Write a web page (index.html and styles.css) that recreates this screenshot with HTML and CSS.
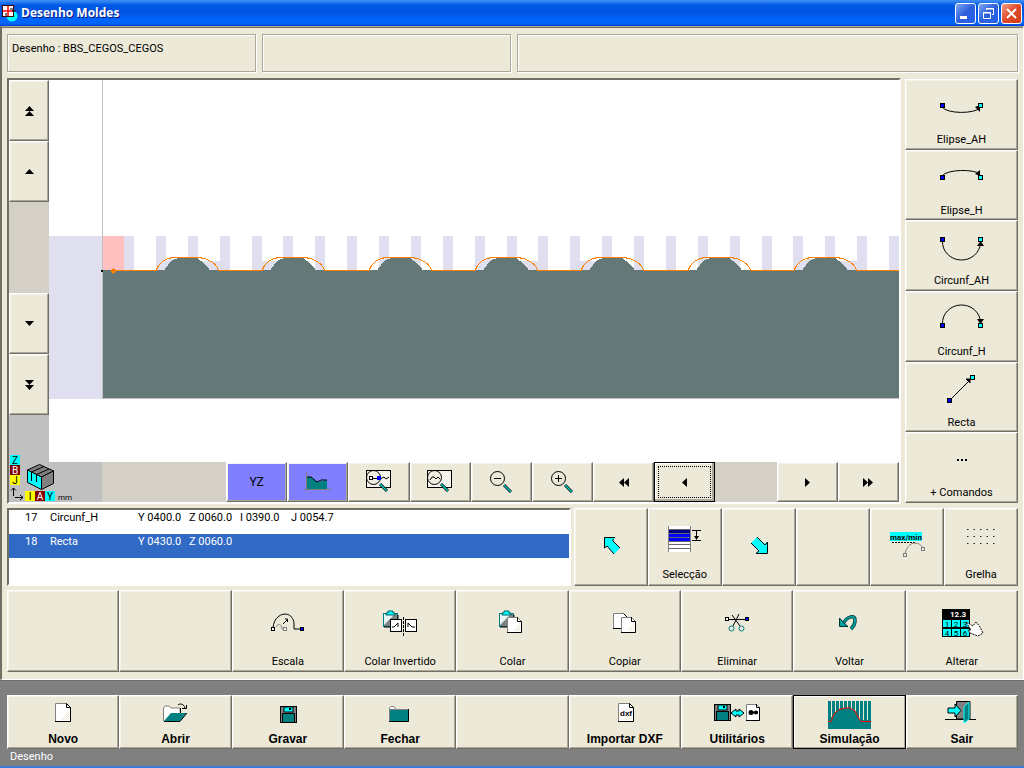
FILE: index.html
```
<!DOCTYPE html>
<html lang="pt">
<head>
    <meta charset="UTF-8">
    <meta name="viewport" content="width=device-width, initial-scale=1.0">
    <title>Desenho Moldes</title>
    <link rel="stylesheet" href="styles.css">
</head>
<body>
    <!-- shared shapes -->
    <svg class="defs" width="0" height="0">
        <defs>
            <pattern id="dither" width="2" height="2" patternUnits="userSpaceOnUse">
                <rect width="2" height="2" fill="#fff"/>
                <rect width="1" height="1" fill="#ece9d8"/>
                <rect x="1" y="1" width="1" height="1" fill="#ece9d8"/>
            </pattern>
            <g id="blueNode"><rect x="0.5" y="0.5" width="4" height="4" fill="#00f" stroke="#000"/></g>
            <g id="cyanNode"><rect x="0.5" y="0.5" width="4" height="4" fill="#0ff" stroke="#000"/></g>
            <g id="page">
                <path d="M0.5 0.5H11.5L15.5 4.5V18.5H0.5Z" fill="#fff" stroke="#808080"/>
                <path d="M14 7V17H5Z" fill="url(#dither)"/>
                <path d="M11.5 0.5V4.5H15.5V18.5H0" fill="none" stroke="#000"/>
                <path d="M11.5 0.5L15.5 4.5" stroke="#000"/>
            </g>
            <g id="floppy">
                <rect x="0.5" y="0.5" width="16" height="16" fill="#808080" stroke="#000"/>
                <rect x="4" y="1" width="9" height="5" fill="#0ff" stroke="#000"/>
                <rect x="9" y="2" width="2" height="2" fill="#000"/>
                <rect x="2.5" y="7.5" width="12" height="9" fill="#008080" stroke="#000"/>
            </g>
            <g id="clipboard">
                <rect x="1.5" y="2.5" width="14" height="13" fill="#808080" stroke="#008080"/>
                <path d="M2 3H13L2 14Z" fill="#e8f4f4"/>
                <path d="M16 4V16H2" fill="none" stroke="#000"/>
                <path d="M4 4V2H6V0H11V2H13V4Z" fill="#0ff" stroke="#006060"/>
            </g>
            <g id="glass">
                <path d="M14 14L21 21" stroke="#000" stroke-width="3"/>
                <path d="M14 14L21 21" stroke="#0cc" stroke-width="1.5"/>
                <circle cx="7.5" cy="7.5" r="7" fill="#ece9d8" fill-opacity="0.6" stroke="#000"/>
            </g>
            <g id="hump">
                <path d="M9 35V32L12 29L14 26L17 24L22 22H41L45 25L48 27L50 30L53 33V35Z" fill="#647878"/>
                <path d="M0 34.5C3 27 9 22 18 21.500H41C51 22 59 26 63 34.500H107" fill="none" stroke="#ff8000"/>
            </g>
        </defs>
    </svg>

    <header class="titlebar">
        <svg class="app-icon" width="16" height="18" viewBox="0 0 16 18">
            <circle cx="10" cy="12" r="5.5" fill="#0ff"/>
            <rect x="0.5" y="1.5" width="11" height="11" fill="#fff" stroke="#400"/>
            <path d="M6 2V12M1 7H11" stroke="#f00" stroke-width="1.5"/>
            <path d="M4 9V12M8 5H11M10 7H14" stroke="#000"/>
        </svg>
        <h1>Desenho Moldes</h1>
        <div class="window-buttons">
            <button class="win" aria-label="Minimizar"><svg width="17" height="17" viewBox="0 0 17 17"><path d="M3 12.5H10" stroke="#fff" stroke-width="3"/></svg></button>
            <button class="win" aria-label="Restaurar"><svg width="17" height="17" viewBox="0 0 17 17" fill="none" stroke="#fff"><path d="M6.5 5V3.5H13.5V9.5H12M6 4H14"/><path d="M3.5 7.5H10.5V13.5H3.5ZM3 8H11"/></svg></button>
            <button class="win close" aria-label="Fechar janela"><svg width="17" height="17" viewBox="0 0 17 17"><path d="M4 4L13 13M13 4L4 13" stroke="#fff" stroke-width="2"/></svg></button>
        </div>
    </header>

    <main class="client">
        <section class="info">
            <div class="panel">Desenho : BBS_CEGOS_CEGOS</div>
            <div class="panel"></div>
            <div class="panel"></div>
        </section>

        <section class="work">
            <div class="viewer">
                <div class="vertical">
                    <button aria-label="Subir tudo"><svg width="9" height="10" viewBox="0 0 9 10"><path d="M4.500 0L9 5H0ZM4.500 5L9 10H0Z"/></svg></button>
                    <button aria-label="Subir"><svg width="9" height="5" viewBox="0 0 9 5"><path d="M4.500 0L9 5H0Z"/></svg></button>
                    <div class="trough"></div>
                    <button aria-label="Descer"><svg width="9" height="5" viewBox="0 0 9 5"><path d="M0 0H9L4.500 5Z"/></svg></button>
                    <button aria-label="Descer tudo"><svg width="9" height="10" viewBox="0 0 9 10"><path d="M0 0H9L4.500 5ZM0 5H9L4.500 10Z"/></svg></button>
                </div>
                <svg class="drawing" viewBox="0 0 850 382" id="drawing">
                    <rect x="0" y="156" width="53" height="163" fill="#e0dfef"/>
                    <g id="bars" fill="#e0dfef">
                        <rect x="75" y="156" width="10" height="34"/>
                    </g>
                    <g fill="#e0dfef">
                        <path d="M107 190L113 183L121 179H132L116 190ZM149 181H171V190H149Z"/>
                        <path d="M203 181H235V190H203Z"/>
                        <path d="M436 179H450V190H436ZM468 181H490V190H468Z"/>
                        <path d="M531 181H554V190H531Z"/>
                        <path d="M745 190L751 183L759 179H770L754 190ZM786 181H809V190H786Z"/>
                    </g>
                    <rect x="54" y="156" width="21" height="34" fill="#ffc0c0"/>
                    <rect x="54" y="190" width="796" height="128" fill="#647878"/>
                    <g id="humps"></g>
                    <path d="M64 190.500H107" stroke="#ff8000"/>
                    <path d="M64 188L67 191L64 194L61 191Z" fill="#ff8000"/>
                    <path d="M53.500 0V318.500H850" fill="none" stroke="#c0c0c0"/>
                    <rect x="52" y="190" width="2" height="2"/>
                </svg>
                <div class="toolbar">
                    <div class="corner"></div>
                    <div class="trough"></div>
                    <button class="on">YZ</button>
                    <button class="on" aria-label="Perfil"><svg width="28" height="20" viewBox="0 0 28 20"><path d="M3 5H7L13 10L23 8V17H3Z" fill="#008080"/><path d="M3 5H7L13 10L17 8H23" fill="none" stroke="#000"/><path d="M2.500 0V19M0 17.500H28" stroke="#808080"/></svg></button>
                    <button aria-label="Enquadrar ponto"><svg width="26" height="24" viewBox="0 0 26 24"><rect x="0.500" y="0.500" width="24" height="17" fill="url(#dither)" stroke="#000"/><use href="#glass"/><path d="M3 8.500H15L18 7L20 9L23 7" fill="none" stroke="#000"/><rect x="3.500" y="6.500" width="3" height="3" fill="#fff" stroke="#000"/><rect x="11" y="6" width="4" height="4" fill="#00f"/></svg></button>
                    <button aria-label="Enquadrar tudo"><svg width="26" height="24" viewBox="0 0 26 24"><rect x="0.500" y="0.500" width="24" height="17" fill="url(#dither)" stroke="#000"/><use href="#glass"/><path d="M3 10L5 7H7L9 9L11 7L13 9" fill="none" stroke="#000"/></svg></button>
                    <button aria-label="Reduzir"><svg width="22" height="22" viewBox="0 0 22 22"><use href="#glass"/><path d="M4 7.500H11" stroke="#000"/></svg></button>
                    <button aria-label="Ampliar"><svg width="22" height="22" viewBox="0 0 22 22"><use href="#glass"/><path d="M4 7.500H11M7.500 4V11" stroke="#000"/></svg></button>
                    <button aria-label="Esquerda tudo"><svg width="10" height="9" viewBox="0 0 10 9"><path d="M5 0V9L0 4.500ZM10 0V9L5 4.500Z"/></svg></button>
                    <button class="focused" aria-label="Esquerda"><svg width="5" height="9" viewBox="0 0 5 9"><path d="M5 0V9L0 4.500Z"/></svg></button>
                    <div class="trough"></div>
                    <button aria-label="Direita"><svg width="5" height="9" viewBox="0 0 5 9"><path d="M0 0V9L5 4.500Z"/></svg></button>
                    <button aria-label="Direita tudo"><svg width="10" height="9" viewBox="0 0 10 9"><path d="M0 0V9L5 4.500ZM5 0V9L10 4.500Z"/></svg></button>
                </div>
                <svg class="axes" width="64" height="48" viewBox="0 0 64 48">
                    <rect x="1" y="1" width="10" height="10" fill="#0ff"/>
                    <rect x="1" y="11" width="10" height="10" fill="#800000"/>
                    <rect x="1" y="21" width="10" height="10" fill="#ff0"/>
                    <rect x="16" y="37" width="10" height="10" fill="#ff0"/>
                    <rect x="26" y="37" width="10" height="10" fill="#800000"/>
                    <rect x="36" y="37" width="10" height="10" fill="#0ff"/>
                    <text x="6" y="10">Z</text>
                    <text x="6" y="20" class="light">B</text>
                    <text x="6" y="30">J</text>
                    <text x="21" y="46">I</text>
                    <text x="31" y="46" class="light">A</text>
                    <text x="41" y="46">Y</text>
                    <text x="56" y="46" class="unit">mm</text>
                    <path d="M4.500 42V34M2 36.500L4.500 34L7 36.500M6 43.500H14M11 41L14 43.500L11 46" fill="none" stroke="#000"/>
                    <path d="M18.500 16L30.500 10.500L44.500 17L32.500 23Z" fill="#808080" stroke="#000"/>
                    <path d="M18.500 16L32.500 23V35.500L18.500 28.500Z" fill="#0ff" stroke="#000"/>
                    <path d="M32.500 23L44.500 17V29.500L32.500 35.500Z" fill="#808080" stroke="#000"/>
                    <path d="M22.500 27V18L35 12.500M27.500 28V20.500L40 15" fill="none" stroke="#000"/>
                </svg>
            </div>

            <nav class="commands">
                <button>
                    <svg width="60" height="48" viewBox="0 0 60 48"><path d="M10 22C15 29 42 29 48 23" fill="none" stroke="#000"/><path d="M48 20V27L43 22Z"/><use href="#blueNode" x="8" y="18"/><use href="#cyanNode" x="46" y="18"/></svg>
                    <span>Elipse_AH</span>
                </button>
                <button>
                    <svg width="60" height="48" viewBox="0 0 60 48"><path d="M10 20C15 13 42 13 48 18" fill="none" stroke="#000"/><path d="M48 14V20L43 18Z"/><use href="#blueNode" x="8" y="19"/><use href="#cyanNode" x="46" y="19"/></svg>
                    <span>Elipse_H</span>
                </button>
                <button>
                    <svg width="60" height="48" viewBox="0 0 60 48"><path d="M10.500 15A19 18 0 0 0 48.500 17" fill="none" stroke="#000"/><path d="M48.500 15L52 20H45Z"/><use href="#blueNode" x="8" y="11"/><use href="#cyanNode" x="46" y="11"/></svg>
                    <span>Circunf_AH</span>
                </button>
                <button>
                    <svg width="60" height="48" viewBox="0 0 60 48"><path d="M10.500 27A19 18 0 0 1 48.500 25" fill="none" stroke="#000"/><path d="M48.500 27L52 22H45Z"/><use href="#blueNode" x="8" y="26"/><use href="#cyanNode" x="46" y="26"/></svg>
                    <span>Circunf_H</span>
                </button>
                <button>
                    <svg width="60" height="48" viewBox="0 0 60 48"><path d="M17 33L38 12" stroke="#000"/><path d="M38 11V15L34 11Z" stroke="#000"/><use href="#blueNode" x="15" y="30"/><use href="#cyanNode" x="38" y="7"/></svg>
                    <span>Recta</span>
                </button>
                <button>
                    <svg width="60" height="48" viewBox="0 0 60 48"><path d="M25 21H27V23H25ZM29 21H31V23H29ZM33 21H35V23H33Z"/></svg>
                    <span>+ Comandos</span>
                </button>
            </nav>
        </section>

        <section class="program">
            <div class="list">
                <table>
                    <colgroup><col class="num"><col class="cmd"><col class="val"><col class="val"><col class="val"><col></colgroup>
                    <tbody>
                        <tr><td>17</td><td>Circunf_H</td><td>Y 0400.0</td><td>Z 0060.0</td><td>I 0390.0</td><td>J 0054.7</td></tr>
                        <tr class="selected"><td>18</td><td>Recta</td><td>Y 0430.0</td><td>Z 0060.0</td><td></td><td></td></tr>
                    </tbody>
                </table>
            </div>
            <div class="list-buttons">
                <button aria-label="Anterior"><svg width="48" height="44" viewBox="0 0 48 44"><path d="M17 19H28L26 23L33 30L27 36L20 28L17 30Z" fill="#0ff"/><path d="M28 19.500H17.500V30L20 28L27 36M26 21V23L33 30" fill="none" stroke="#000"/></svg></button>
                <button>
                    <svg width="48" height="44" viewBox="0 0 48 44"><rect x="8" y="8" width="21" height="26" fill="#fff"/><rect x="8" y="12" width="21" height="4" fill="#000080"/><rect x="8" y="16" width="21" height="7" fill="#00f"/><path d="M7.500 8V34M29.500 8V34" stroke="#808080"/><path d="M8 11.500H29M8 15.500H29M8 19.500H29M8 23.500H29M8 26.500H29M8 30.500H29" stroke="#667"/><path d="M31 12.500H40M35.500 12V21M31 22.500H40" stroke="#000"/><path d="M33 18H38L35.500 22Z"/></svg>
                    <span>Selecção</span>
                </button>
                <button aria-label="Seguinte"><svg width="48" height="44" viewBox="0 0 48 44"><path d="M16 25L22 19L30 26L32 24V35H21L24 32Z" fill="#0ff"/><path d="M22 19L30 27L32.500 24V35.500H21L24 33L16 25" fill="none" stroke="#000"/></svg></button>
                <button aria-label="Vazio"></button>
                <button aria-label="max/min"><svg width="48" height="44" viewBox="0 0 48 44"><rect x="7" y="14" width="32" height="9" fill="#0ff"/><text x="23" y="22" class="tiny bold">max/min</text><path d="M9 24.500H33" stroke="#000" stroke-dasharray="2 1"/><path d="M22 36C23 30 27 25 32 25C36 25 38 27 40 30" fill="none" stroke="#808080"/><rect x="20.500" y="35.500" width="3" height="3" fill="#ece9d8" stroke="#808080"/><rect x="38.500" y="29.500" width="3" height="3" fill="#ece9d8" stroke="#808080"/></svg></button>
                <button>
                    <svg width="48" height="44" viewBox="0 0 48 44"><path d="M10 11.500H38M10 18.500H38M10 25.500H38" stroke="#222" stroke-dasharray="1.500 5"/></svg>
                    <span>Grelha</span>
                </button>
            </div>
        </section>

        <section class="edit">
            <button aria-label="Vazio"></button>
            <button aria-label="Vazio"></button>
            <button>
                <svg width="48" height="44" viewBox="0 0 48 44"><path d="M9 26C10 10 28 7 30 21V27H38" fill="none" stroke="#000"/><path d="M12 25C14 21 18 22 18 27H20" fill="none" stroke="#808080"/><rect x="7.500" y="25.500" width="3" height="3" fill="#fff" stroke="#000"/><rect x="19.500" y="25.500" width="3" height="3" fill="#fff" stroke="#808080"/><rect x="36.500" y="25.500" width="3" height="3" fill="#00f" stroke="#000"/><path d="M19 22L24 17M21 17H23.500V20" fill="none" stroke="#000"/></svg>
                <span>Escala</span>
            </button>
            <button>
                <svg width="48" height="44" viewBox="0 0 48 44"><use href="#clipboard" x="6" y="9"/><rect x="14.500" y="17.500" width="11" height="12" fill="#fff" stroke="#000"/><rect x="29.500" y="17.500" width="11" height="12" fill="#fff" stroke="#000"/><path d="M16 25H18L22 21V25M32 21V25M32 21L36 25H39" fill="none" stroke="#000"/><path d="M27.500 15V34" stroke="#000" stroke-dasharray="3 1"/></svg>
                <span>Colar Invertido</span>
            </button>
            <button>
                <svg width="48" height="44" viewBox="0 0 48 44"><use href="#clipboard" x="10" y="9"/><path d="M19.500 15.500H29.500L33.500 19.500V30.500H19.500Z" fill="#fff" stroke="#808080"/><path d="M32 21V29H25Z" fill="url(#dither)"/><path d="M29.500 15V19.500H33.500V30.500H19" fill="none" stroke="#000"/></svg>
                <span>Colar</span>
            </button>
            <button>
                <svg width="48" height="44" viewBox="0 0 48 44"><path d="M12.500 11.500H22.500L26.500 15.500V26.500H12.500Z" fill="#fff" stroke="#808080"/><path d="M22.500 11.500L26.500 15.500M12 26.500H20" stroke="#000"/><path d="M20.500 15.500H30.500L34.500 19.500V30.500H20.500Z" fill="#fff" stroke="#808080"/><path d="M33 21V29H26Z" fill="url(#dither)"/><path d="M30.500 15V19.500H34.500V30.500H20" fill="none" stroke="#000"/></svg>
                <span>Copiar</span>
            </button>
            <button>
                <svg width="48" height="44" viewBox="0 0 48 44"><path d="M15 17.500H34" stroke="#000"/><rect x="12.500" y="15.500" width="3" height="3" fill="#fff" stroke="#000"/><rect x="32.500" y="15.500" width="3" height="3" fill="#00f" stroke="#000"/><path d="M19 13L27 24M26 12L20 24" stroke="#000"/><circle cx="18.500" cy="26.500" r="2.500" fill="none" stroke="#008080"/><circle cx="28.500" cy="26.500" r="2.500" fill="none" stroke="#008080"/></svg>
                <span>Eliminar</span>
            </button>
            <button>
                <svg width="48" height="44" viewBox="0 0 48 44"><path d="M18 22C22 14 31 12 30 19C30 22 29 24 26 27" fill="none" stroke="#033" stroke-width="3.500"/><path d="M18 22C22 14 31 12 30 19C30 22 29 24 26 27" fill="none" stroke="#00a0a0" stroke-width="2"/><path d="M14.500 16V24.500H23L20 22Z" fill="#00a0a0" stroke="#033"/></svg>
                <span>Voltar</span>
            </button>
            <button>
                <svg width="48" height="44" viewBox="0 0 48 44"><rect x="4" y="7" width="28" height="28"/><path d="M5 18H13V25H5ZM14 18H22V25H14ZM23 18H31V25H23ZM5 27H13V34H5ZM14 27H22V34H14ZM23 27H31V34H23Z" fill="#0ff"/><text x="20" y="15" class="tiny bold light">12.3</text><text x="9" y="25" class="tiny">1</text><text x="18" y="25" class="tiny">2</text><text x="27" y="25" class="tiny">3</text><text x="9" y="34" class="tiny">4</text><text x="18" y="34" class="tiny">5</text><text x="27" y="34" class="tiny">6</text><path d="M28 20L35 24L38 20L42 25L45 31L40 34L32 31L30 28H33Z" fill="#fff" stroke="#000" stroke-dasharray="2 1"/></svg>
                <span>Alterar</span>
            </button>
        </section>
    </main>

    <footer class="bottom">
        <div class="files">
            <button><svg width="48" height="30" viewBox="0 0 48 30"><use href="#page" x="16" y="2"/></svg><span>Novo</span></button>
            <button>
                <svg width="48" height="30" viewBox="0 0 48 30"><path d="M12.500 20V7L14 5H18L20 7H29V12" fill="#fff" stroke="#808080"/><path d="M29.500 7V12" stroke="#000"/><path d="M13 20L20 12H36L29 20Z" fill="#008080"/><path d="M13 20.500H29L36 12" fill="none" stroke="#000"/><path d="M27 4C29 2 33 3 34 7M31 7.500H35.500V4" fill="none" stroke="#000"/></svg>
                <span>Abrir</span>
            </button>
            <button><svg width="48" height="30" viewBox="0 0 48 30"><use href="#floppy" x="16" y="5"/></svg><span>Gravar</span></button>
            <button>
                <svg width="48" height="30" viewBox="0 0 48 30"><path d="M13.500 9V7L15 5.500H18L20 8.500Z" fill="#fff" stroke="#808080"/><rect x="13.500" y="8.500" width="19" height="12" fill="#008080" stroke="#808080"/><path d="M13 20.500H32.500V8" fill="none" stroke="#000"/></svg>
                <span>Fechar</span>
            </button>
            <button aria-label="Vazio"></button>
            <button><svg width="48" height="30" viewBox="0 0 48 30"><use href="#page" x="17" y="2"/><text x="25" y="15" class="tiny">dxf</text></svg><span>Importar DXF</span></button>
            <button>
                <svg width="48" height="30" viewBox="0 0 48 30"><use href="#floppy" x="1" y="3"/><path d="M18 12L23 8V10H26V8L31 12L26 16V14H23V16Z" fill="#0ff" stroke="#000"/><path d="M33.500 3.500H43.500L46.500 6.500V19.500H33.500Z" fill="#fff" stroke="#808080"/><path d="M43.500 3V6.500H46.500V19.500H33" fill="none" stroke="#000"/><path d="M36 11.500H45" stroke="#000" stroke-width="2"/><circle cx="38" cy="11.500" r="2.500"/><circle cx="43" cy="11.500" r="2"/></svg>
                <span>Utilitários</span>
            </button>
            <button class="default">
                <svg width="48" height="30" viewBox="0 0 48 30"><rect x="3" y="0" width="43" height="28" fill="#008080"/><path d="M6.500 0V16M10.500 0V11M14.500 0V8M18.500 0V7M22.500 0V7M26.500 0V8M30.500 0V12M34.500 0V19M38.500 0V19M42.500 0V19" stroke="#ece9d8"/><path d="M3 20.500H6L9 13L14 8.500L20 7H25L30 10L33 16L36 20.500H46" fill="none" stroke="#f00"/></svg>
                <span>Simulação</span>
            </button>
            <button>
                <svg width="48" height="30" viewBox="0 0 48 30"><path d="M7 18.500H38" stroke="#000"/><path d="M18.500 18V0.500H32V18Z" fill="#808080" stroke="#000"/><path d="M26 6L31 1V18L26 22Z" fill="#008080" stroke="#0ff"/><path d="M10 7H17V3L23 9.500L17 16V12H10Z" fill="#0ff" stroke="#000"/></svg>
                <span>Sair</span>
            </button>
        </div>
        <div class="status">Desenho</div>
    </footer>

    <script>
        const ns = 'http://www.w3.org/2000/svg';
        const bars = document.getElementById('bars');
        const humps = document.getElementById('humps');

        // guide bars across the top of the block
        for (let i = 0; i < 24; i++) {
            const bar = document.createElementNS(ns, 'rect');
            bar.setAttribute('x', Math.round(107 + i * 31.87));
            bar.setAttribute('y', 156);
            bar.setAttribute('width', 10);
            bar.setAttribute('height', 34);
            bars.appendChild(bar);
        }

        for (let i = 0; i < 7; i++) {
            const hump = document.createElementNS(ns, 'use');
            hump.setAttribute('href', '#hump');
            hump.setAttribute('x', Math.round(107 + i * 106.3));
            hump.setAttribute('y', 156);
            humps.appendChild(hump);
        }
    </script>
</body>
</html>
```
FILE: styles.css
```
* {
    box-sizing: border-box;
}
body {
    margin: 0;
    min-height: 100vh;
    display: flex;
    flex-direction: column;
    font-family: Roboto, Arial, sans-serif;
    font-size: 11px;
    line-height: 14px;
    color: #000;
    background-color: #ece9d8;
}
.defs {
    position: absolute;
}
svg {
    display: block;
    flex: none;
}
button {
    display: flex;
    flex-direction: column;
    align-items: center;
    min-width: 0;
    margin: 0;
    padding: 0;
    font: inherit;
    color: #000;
    background-color: #ece9d8;
    border: 1px solid;
    border-color: #fff #716f64 #716f64 #fff;
    border-radius: 0;
    box-shadow: inset -1px -1px #aca899, inset 1px 1px #f6f4ea;
}

/* title bar */
.titlebar {
    flex: none;
    display: flex;
    align-items: center;
    height: 26px;
    padding: 0 2px;
    background: linear-gradient(#3f8cf3 0, #2b7ef0 2px, #0058e6 5px, #0054e3 12px, #0066ff 21px, #0060f5 24px, #0040c8 26px);
}
.titlebar h1 {
    flex: 1;
    margin: 0 0 0 3px;
    font-family: "Open Sans", sans-serif;
    font-size: 12px;
    font-weight: bold;
    color: #fff;
    text-shadow: 1px 1px #0a1883;
}
.window-buttons {
    display: flex;
    gap: 2px;
}
.win {
    width: 21px;
    height: 21px;
    padding: 1px;
    border: 1px solid #fff;
    border-radius: 3px;
    background: linear-gradient(135deg, #7ea6f4, #2d5fdc 50%, #2264ee);
    box-shadow: none;
}
.win.close {
    background: linear-gradient(135deg, #f0a088, #e0492a 50%, #d03c10);
}

.client {
    flex: 1;
    display: flex;
    flex-direction: column;
    padding: 7px 5px 7px 5px;
    border: 1px solid #aca899;
    border-right-color: #fff;
    border-bottom-color: #fff;
    border-left: 2px solid #716f64;
    box-shadow: inset 0 1px #716f64;
}

/* info panels */
.info {
    display: grid;
    grid-template-columns: 249px 249px 1fr;
    gap: 6px;
    height: 38px;
    margin-bottom: 6px;
}
.panel {
    padding: 7px 4px;
    border: 1px solid #aca899;
    box-shadow: inset 1px 1px #fff, 1px 1px #fff;
}

/* drawing area */
.work {
    flex: 1;
    display: flex;
    gap: 4px;
    margin-bottom: 4px;
}
.viewer {
    position: relative;
    flex: 1;
    display: grid;
    grid-template-columns: 40px 1fr;
    grid-template-rows: 1fr 40px;
    border: 2px solid;
    border-color: #716f64 #fff #fff #716f64;
    background-color: #fff;
}
.vertical {
    display: grid;
    grid-template-rows: 61px 61px 1fr 61px 61px 47px;
    background-color: #c0c0c0;
}
.vertical button, .toolbar button {
    justify-content: center;
}
.trough {
    background-color: #d4d0c8;
}
.drawing {
    width: 100%;
    height: 100%;
    min-height: 0;
    shape-rendering: crispEdges;
}
.toolbar {
    grid-column: 1 / 3;
    display: grid;
    grid-template-columns: 93px 124px repeat(11, 1fr);
}
.corner {
    background-color: #c0c0c0;
}
.toolbar .on {
    background-color: #8080ff;
    font-size: 12px;
}
.toolbar .focused {
    border-color: #000;
    outline: 1px dotted #000;
    outline-offset: -5px;
    box-shadow: inset -2px -2px #aca899, inset 1px 1px #fff;
}
.axes {
    position: absolute;
    left: 0;
    bottom: 0;
}
svg text {
    font-size: 10px;
    text-anchor: middle;
}
svg .light {
    fill: #fff;
}
svg .unit {
    font-size: 8px;
}
svg .tiny {
    font-size: 8px;
}
svg .bold {
    font-weight: bold;
}

.commands {
    display: grid;
    grid-template-rows: repeat(6, 1fr);
    width: 113px;
    padding: 1px 0;
}
.commands button {
    padding: 5px 0 1px;
    justify-content: flex-start;
}

/* program list */
.program {
    display: flex;
    gap: 3px;
    height: 78px;
    margin-bottom: 4px;
}
.list {
    flex: 562;
    border: 2px solid;
    border-color: #716f64 #fff #fff #716f64;
    background-color: #fff;
}
.list table {
    width: 100%;
    table-layout: fixed;
    border-collapse: collapse;
}
.list tr {
    height: 24px;
}
.list td {
    padding: 1px 0;
    vertical-align: top;
    white-space: nowrap;
}
.list td:first-child {
    padding-left: 16px;
}
.num {
    width: 41px;
}
.cmd {
    width: 88px;
}
.val {
    width: 51px;
}
.selected {
    color: #fff;
    background-color: #316ac5;
}
.list-buttons {
    flex: 446;
    display: grid;
    grid-template-columns: repeat(6, 1fr);
}
.list-buttons button {
    padding-top: 9px;
    justify-content: flex-start;
    gap: 6px;
}

/* edit and file buttons */
.edit {
    display: grid;
    grid-template-columns: repeat(9, 1fr);
    height: 82px;
}
.edit button {
    padding-top: 11px;
    justify-content: flex-start;
    gap: 9px;
}
.bottom {
    flex: none;
    height: 88px;
    padding: 14px 6px 0 7px;
    background-color: #808080;
    border-top: 1px solid #716f64;
    border-bottom: 2px solid #3a7ad9;
}
.files {
    display: grid;
    grid-template-columns: repeat(9, 1fr);
    height: 54px;
}
.files button {
    padding-top: 5px;
    justify-content: flex-start;
    gap: 1px;
    font-family: "Liberation Sans", Arial, sans-serif;
    font-size: 12px;
    font-weight: bold;
}
.files .default {
    border-color: #000;
    box-shadow: inset -1px -1px #aca899, inset 1px 1px #fff;
}
.status {
    padding: 1px 3px;
    color: #fff;
}
```
